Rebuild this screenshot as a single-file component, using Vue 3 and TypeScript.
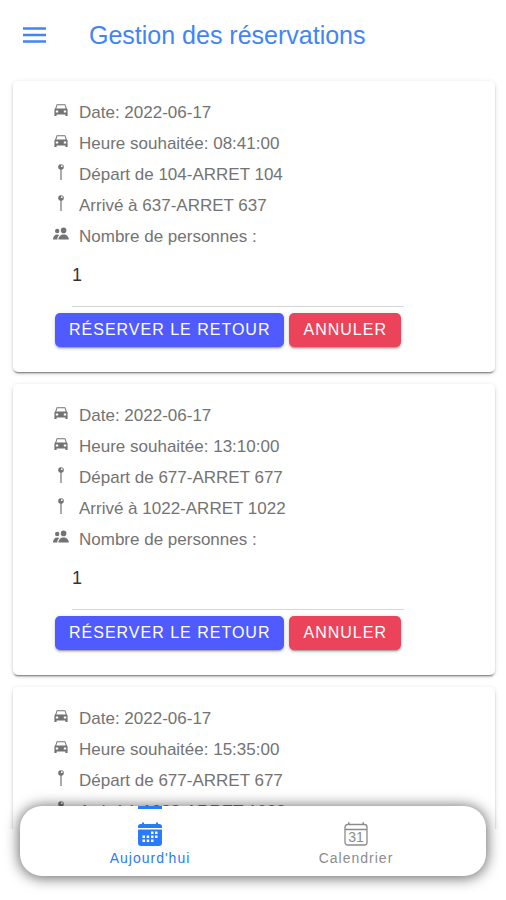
<script setup lang="ts">
import { ref } from 'vue'

interface Reservation {
  id: number
  date: string
  time: string
  from: string
  to: string
  people: number
}

type Tab = 'today' | 'calendar'

const reservations = ref<Reservation[]>([
  { id: 1, date: '2022-06-17', time: '08:41:00', from: '104-ARRET 104', to: '637-ARRET 637', people: 1 },
  { id: 2, date: '2022-06-17', time: '13:10:00', from: '677-ARRET 677', to: '1022-ARRET 1022', people: 1 },
  { id: 3, date: '2022-06-17', time: '15:35:00', from: '677-ARRET 677', to: '1022-ARRET 1022', people: 1 },
])

const activeTab = ref<Tab>('today')

function details(r: Reservation) {
  return [
    { icon: 'car', text: `Date: ${r.date}` },
    { icon: 'car', text: `Heure souhaitée: ${r.time}` },
    { icon: 'pin', text: `Départ de ${r.from}` },
    { icon: 'pin', text: `Arrivé à ${r.to}` },
  ]
}

function cancel(id: number) {
  reservations.value = reservations.value.filter((r) => r.id !== id)
}
</script>

<template>
  <div class="page">
    <header class="toolbar">
      <button class="menu" type="button" aria-label="Menu">
        <svg viewBox="0 0 24 18" width="24" height="18" aria-hidden="true">
          <path d="M0 2.500h23M0 9h23M0 15.500h23" stroke="currentColor" stroke-width="2.600" />
        </svg>
      </button>
      <h1>Gestion des réservations</h1>
    </header>

    <main class="content">
      <article v-for="r in reservations" :key="r.id" class="card">
        <div v-for="d in details(r)" :key="d.text" class="row">
          <svg v-if="d.icon === 'car'" class="icon" viewBox="0 0 16 16" aria-hidden="true">
            <path
              fill="currentColor"
              fill-rule="evenodd"
              d="M3.700 2.200h8.600l1.400 4 .9 1.300V14h-2.200v-1.400H3.600V14H1.400V7.500l.9-1.300zM4.300 3.200L3.300 6.600h9.400l-1-3.400zM2.800 8.600v1.800h2.400V8.600zM10.800 8.600v1.800h2.400V8.600z"
            />
          </svg>
          <svg v-else class="icon" viewBox="0 0 16 16" aria-hidden="true">
            <path d="M8 5v11" stroke="currentColor" stroke-width="1.200" />
            <circle cx="8" cy="3" r="2.800" fill="currentColor" />
            <circle cx="8.800" cy="2.200" r="0.900" fill="#fff" />
          </svg>
          <span>{{ d.text }}</span>
        </div>
        <div class="row">
          <svg class="icon" viewBox="0 0 16 16" aria-hidden="true">
            <g fill="currentColor">
              <circle cx="10.600" cy="4.400" r="2.800" />
              <path d="M5.400 13.600c0-3.200 2.300-5.200 5.200-5.200s5.200 2 5.200 5.200z" />
              <circle cx="4.200" cy="5" r="2.200" />
              <path d="M0 13.600c0-3 1.700-5 4.200-5 .9 0 1.500.200 2.100.500-1.300 1.100-2 2.600-2 4.500z" />
            </g>
          </svg>
          <label :for="`people-${r.id}`">Nombre de personnes :</label>
        </div>
        <input :id="`people-${r.id}`" v-model="r.people" class="people" type="text" inputmode="numeric" />
        <div class="actions">
          <button class="btn primary" type="button">Réserver le retour</button>
          <button class="btn danger" type="button" @click="cancel(r.id)">Annuler</button>
        </div>
      </article>
    </main>

    <nav class="tabs">
      <button class="tab" :class="{ active: activeTab === 'today' }" type="button" @click="activeTab = 'today'">
        <svg viewBox="0 0 24 24" width="24" height="24" aria-hidden="true">
          <path
            fill="currentColor"
            d="M0 6V4.600A2.600 2.600 0 0 1 2.600 2H4V.4h2V2h12V.4h2V2h1.400A2.600 2.600 0 0 1 24 4.600V6z"
          />
          <path fill="currentColor" d="M0 7.500h24V21a3 3 0 0 1-3 3H3a3 3 0 0 1-3-3z" />
          <path
            fill="#fff"
            d="M13 9.500h2.500V12H13zM17 9.500h2.500V12H17zM4.500 13.500H7V16H4.500zM8.700 13.500h2.500V16H8.700zM13 13.500h2.500V16H13zM17 13.500h2.500V16H17zM4.500 17.500H7V20H4.500zM8.700 17.500h2.500V20H8.700zM13 17.500h2.500V20H13z"
          />
        </svg>
        <span>Aujourd'hui</span>
      </button>
      <button class="tab" :class="{ active: activeTab === 'calendar' }" type="button" @click="activeTab = 'calendar'">
        <svg viewBox="0 0 24 24" width="24" height="24" aria-hidden="true">
          <rect x="1" y="2.500" width="22" height="20.500" rx="2.500" fill="none" stroke="currentColor" stroke-width="1.300" />
          <path d="M1 7.500h22M4.800.3v2.400M19.200.3v2.400" fill="none" stroke="currentColor" stroke-width="1.500" />
          <text class="day" x="12" y="20" text-anchor="middle" fill="currentColor">31</text>
        </svg>
        <span>Calendrier</span>
      </button>
    </nav>
  </div>
</template>

<style>
body {
  margin: 0;
  background: #fff;
}
</style>

<style scoped>
.page {
  display: flex;
  flex-direction: column;
  height: 100vh;
  overflow: hidden;
  font-family: 'Liberation Sans', Arial, sans-serif;
  color: #737373;
}

button,
input {
  font-family: inherit;
}

.toolbar {
  display: flex;
  flex: none;
  align-items: center;
  gap: 42px;
  height: 70px;
  padding: 0 23px;
  color: #3f85f8;
}

.menu {
  display: flex;
  padding: 0;
  border: 0;
  background: none;
  color: inherit;
  cursor: pointer;
}

h1 {
  margin: 0;
  font-size: 25px;
  font-weight: 400;
}

.content {
  display: flex;
  flex: 1;
  flex-direction: column;
  gap: 12px;
  min-height: 0;
  overflow-y: auto;
  scrollbar-width: none;
  padding: 11px 11px 0 13px;
}

.card {
  flex: none;
  padding: 16px 91px 25px 40px;
  border-radius: 5px;
  background: #fff;
  box-shadow:
    0 3px 1px -2px rgba(0, 0, 0, 0.3),
    0 2px 2px 0 rgba(0, 0, 0, 0.18),
    0 1px 5px 0 rgba(0, 0, 0, 0.12);
}

.row {
  display: flex;
  gap: 10px;
  font-size: 17px;
  line-height: 31px;
}

.icon {
  flex: none;
  width: 16px;
  height: 16px;
  margin-top: 5px;
}

.people {
  display: block;
  box-sizing: border-box;
  width: calc(100% - 19px);
  height: 55px;
  margin-left: 19px;
  padding: 0 0 7px;
  border: 0;
  border-bottom: 1px solid #d6d6d6;
  border-radius: 0;
  outline: 0;
  background: none;
  color: #333;
  font-size: 18px;
}

.actions {
  display: flex;
  gap: 5px;
  margin: 6px 0 0 2px;
}

.btn {
  flex: none;
  height: 34px;
  padding: 0 14px;
  border: 0;
  border-radius: 5px;
  color: #fff;
  font-size: 16px;
  letter-spacing: 1px;
  text-transform: uppercase;
  cursor: pointer;
  box-shadow:
    0 3px 1px -2px rgba(0, 0, 0, 0.2),
    0 2px 2px 0 rgba(0, 0, 0, 0.14),
    0 1px 5px 0 rgba(0, 0, 0, 0.12);
}

.primary {
  background: #4f5bff;
}

.danger {
  background: #eb445a;
}

.tabs {
  position: relative;
  display: flex;
  flex: none;
  justify-content: center;
  height: 70px;
  margin: -23px 20px 24px;
  padding: 0 27px;
  border-radius: 22px;
  background: #fff;
  box-shadow: 0 1px 14px 1px rgba(0, 0, 0, 0.6);
}

.tab {
  display: flex;
  flex: 1;
  flex-direction: column;
  align-items: center;
  gap: 4px;
  padding: 0;
  border: 0;
  background: none;
  color: #8c8c8c;
  font-size: 14px;
  line-height: 16px;
  letter-spacing: 1px;
  cursor: pointer;
}

.tab::before {
  width: 24px;
  height: 3px;
  margin-bottom: 9px;
  content: '';
}

.tab.active {
  color: #2a7bf6;
}

.tab.active::before {
  background: currentColor;
}

.day {
  font-size: 14px;
  letter-spacing: 0;
}
</style>
